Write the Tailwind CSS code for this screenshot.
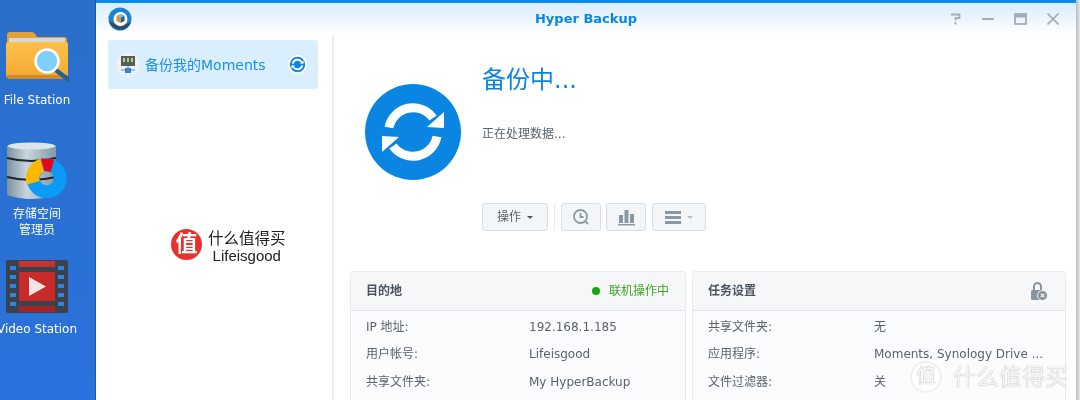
<!DOCTYPE html>
<html lang="zh"><head><meta charset="utf-8">
<script src="https://cdn.jsdelivr.net/npm/@tailwindcss/browser@4"></script>
</head>
<body class="m-0 w-[1080px] h-[400px] overflow-hidden bg-white font-['DejaVu_Sans','Noto_Sans_CJK_SC',sans-serif]">
<div class="relative flex w-[1080px] h-[400px] overflow-hidden blur-[0.35px]">
  <!-- Desktop -->
  <aside class="w-[96px] h-full shrink-0 bg-gradient-to-b from-[#2a6fca] to-[#2a72dc] flex flex-col items-start text-white text-[12px] leading-4 overflow-hidden border-r border-[#1c56a6]">
    <div class="w-[74px] flex flex-col items-center mt-[30px]">
      <svg width="64" height="52" viewBox="0 0 64 52">
        <path d="M2 5q0-3 3-3h22q2 0 3 2l2 3h27q3 0 3 3v30H2z" fill="#e3a136"/>
        <rect x="4" y="8" width="56" height="10" fill="#d8d8d4"/>
        <defs><linearGradient id="fg" x1="0" x2="0" y1="0" y2="1"><stop offset="0" stop-color="#fdc04c"/><stop offset="1" stop-color="#f3a931"/></linearGradient></defs>
        <path d="M1 14q0-2 2-2h58q2 0 2 2v31q0 3-3 3H4q-3 0-3-3z" fill="url(#fg)"/>
        <path d="M1 45h62q0 3-3 4H4q-3-1-3-4z" fill="#cf8c24"/>
        <path d="M52 41l12 9" stroke="#265f91" stroke-width="4.500" stroke-linecap="round"/>
        <circle cx="42" cy="31" r="11.500" fill="#7fd0ff" stroke="#fff" stroke-width="2.500"/>
      </svg>
      <span class="mt-[10px] whitespace-nowrap">File Station</span>
    </div>
    <div class="w-[74px] flex flex-col items-center mt-[33px]">
      <svg width="62" height="60" viewBox="0 0 62 60">
        <defs><linearGradient id="dbg" x1="0" x2="1" y1="0" y2="0"><stop offset="0" stop-color="#7c929f"/><stop offset=".4" stop-color="#c7d6de"/><stop offset="1" stop-color="#8399a6"/></linearGradient></defs>
        <path d="M1 5Q25 -1 50 5V54Q25 62 1 54z" fill="url(#dbg)"/>
        <ellipse cx="25.500" cy="5" rx="24" ry="3.500" fill="#dbe6ec"/>
        <path d="M1 17Q25 23 50 17M1 36Q25 42 50 36" stroke="#20262b" stroke-width="2" fill="none"/>
        <path fill-rule="evenodd" d="M40.700 17.300a20 20 0 1 0 0 40a20 20 0 1 0 0-40zM40.700 30.300a7 7 0 1 1 0 14a7 7 0 1 1 0-14z" fill="#0b9bf7"/>
        <path d="M20.800 43.500A20.500 20.500 0 0 1 34.500 17.800L38 30.500A7.500 7.500 0 0 0 33.500 40z" fill="#fdb900"/>
        <path d="M35 17.500L48.300 18.500L44.800 30.700L38.300 30z" fill="#e8051b"/>
      </svg>
      <span class="mt-[5px] text-center">存储空间<br>管理员</span>
    </div>
    <div class="w-[74px] flex flex-col items-center mt-[22px]">
      <svg width="62" height="54" viewBox="0 0 62 54">
        <rect x="0" y="0" width="62" height="53" rx="2" fill="#3b414d"/>
        <rect x="13" y="1" width="36" height="6" fill="#c53434"/>
        <rect x="13" y="46" width="36" height="6" fill="#a72325"/>
        <rect x="13" y="12" width="36" height="29" fill="#c92a2a"/>
        <path d="M23 17L40 26.500L23 36z" fill="#f2e4e2"/>
        <g fill="#2e86de"><rect x="4" y="6" width="6" height="4"/><rect x="4" y="15" width="6" height="4"/><rect x="4" y="24" width="6" height="4"/><rect x="4" y="33" width="6" height="4"/><rect x="4" y="42" width="6" height="4"/><rect x="52" y="6" width="6" height="4"/><rect x="52" y="15" width="6" height="4"/><rect x="52" y="24" width="6" height="4"/><rect x="52" y="33" width="6" height="4"/><rect x="52" y="42" width="6" height="4"/></g>
      </svg>
      <span class="mt-[7px] whitespace-nowrap">Video Station</span>
    </div>
  </aside>

  <!-- Window -->
  <div class="w-[980px] h-full shrink-0 flex flex-col border-t-[3px] border-[#0a8be8] bg-white">
    <header class="h-[31px] shrink-0 flex items-center bg-gradient-to-b from-[#d8ecfd] to-[#ffffff] pl-[12px] pr-[17px]">
      <svg width="24" height="24" viewBox="0 0 24 24" class="shrink-0">
        <circle cx="12" cy="12" r="11.500" fill="#1a86d0"/>
        <path d="M1 14A11.500 11.500 0 0 0 23 15L12 20z" fill="#31485f"/>
        <circle cx="12.500" cy="12" r="7" fill="#fff"/>
        <path d="M12.500 7l4 2v5l-4 2z" fill="#1e5f91"/>
        <path d="M12.500 7l-4 2v5l4 2z" fill="#ef8d2d"/>
        <path d="M12.500 7l4 2-4 2-4-2z" fill="#7fb9df"/>
      </svg>
      <h1 class="flex-1 text-center text-[13px] font-bold text-[#0a86e0] pl-[90px] pt-[1px]">Hyper Backup</h1>
      <div class="flex items-center gap-[20px] text-[#a3adb6]">
        <svg width="12" height="12" viewBox="0 0 12 12" fill="none" stroke="currentColor" stroke-width="1.800"><path d="M1 1.500h8.500v3.500H5.500v2.500"/><path d="M5.500 9v2.500"/></svg>
        <svg width="12" height="12" viewBox="0 0 12 12" fill="none" stroke="currentColor" stroke-width="2"><path d="M0 6h12"/></svg>
        <svg width="13" height="12" viewBox="0 0 13 12" fill="none" stroke="currentColor"><rect x="1" y="1" width="11" height="10" stroke-width="1.800"/><path d="M1 3h11" stroke-width="3"/></svg>
        <svg width="12" height="12" viewBox="0 0 12 12" fill="none" stroke="currentColor" stroke-width="1.600"><path d="M.5.500l11 11M11.500.500l-11 11"/></svg>
      </div>
    </header>
    <div class="flex-1 flex min-h-0">
      <!-- Sidebar -->
      <nav class="relative w-[238px] shrink-0 pl-[12px] pt-[6px] border-r-2 border-[#eceff2]">
        <div class="w-[210px] h-[49px] rounded-[3px] bg-[#d9eefe] flex items-center pl-[8px] pr-[11px]">
          <span class="w-[24px] h-[24px] rounded-full bg-[#edf2f6] flex items-center justify-center shrink-0">
            <svg width="16" height="18" viewBox="0 0 16 18"><rect x="1" y="0" width="14" height="10" fill="#565c5a"/><g fill="#b8d080"><rect x="3" y="2" width="2" height="4"/><rect x="7" y="2" width="2" height="4"/><rect x="11" y="2" width="2" height="4"/></g><path d="M8 10v3M1 14h14" stroke="#75818a"/><rect x="5" y="12" width="6" height="5" fill="#2888e0"/></svg>
          </span>
          <span class="ml-[5px] text-[14px] leading-none text-[#1b8fe9] whitespace-nowrap flex-1">备份我的Moments</span>
          <svg width="19" height="19" viewBox="0 0 96 96" class="shrink-0"><circle cx="48" cy="48" r="48" fill="#fff"/><circle cx="48" cy="48" r="39" fill="#0a85e6"/><g fill="none" stroke="#fff" stroke-width="10"><path d="M24 43.500A24.500 24.500 0 0 1 68 34"/><path d="M72 52.500A24.500 24.500 0 0 1 28 62"/></g><path d="M60 43L79 44V26z" fill="#fff"/><path d="M36 53L17 52V70z" fill="#fff"/></svg>
        </div>
        <!-- Watermark logo -->
        <div class="absolute left-[75px] top-[191px] flex items-center">
          <span class="w-[31px] h-[31px] rounded-full bg-[#e8302c] text-white text-[22px] leading-[29px] text-center font-bold">值</span>
          <div class="ml-[6px] mt-[6px] flex flex-col items-center text-[#222]">
            <span class="text-[15.500px] leading-[17px]">什么值得买</span>
            <span class="text-[15px] leading-[16px] font-['Liberation_Sans']">Lifeisgood</span>
          </div>
        </div>
      </nav>
      <!-- Main -->
      <main class="flex-1 min-w-0 flex flex-col pl-[16px]">
        <div class="flex h-[232px] shrink-0">
          <div class="w-[132px] shrink-0 pl-[15px] pt-[50px]">
            <svg width="96" height="96" viewBox="0 0 96 96"><circle cx="48" cy="48" r="48" fill="#0a85e2"/><g fill="none" stroke="#fff" stroke-width="9"><path d="M24 43.500A24.500 24.500 0 0 1 68 34"/><path d="M72 52.500A24.500 24.500 0 0 1 28 62"/></g><path d="M62 43L79 44V28z" fill="#fff"/><path d="M34 53L17 52V68z" fill="#fff"/></svg>
          </div>
          <div class="flex-1 pt-[30px]">
            <h2 class="text-[24px] leading-[32px] text-[#0a85e2]">备份中...</h2>
            <p class="mt-[29px] text-[12px] leading-[18px] text-[#59636d]">正在处理数据...</p>
            <div class="mt-[60px] flex items-center">
              <button class="w-[66px] h-[28px] rounded-[3px] border border-[#d7e0e9] bg-[#f3f6f9] flex items-center justify-center gap-[6px] text-[12px] text-[#59636d]">操作<span class="w-0 h-0 border-x-[3px] border-x-transparent border-t-[3px] border-t-[#4a535c]"></span></button>
              <span class="w-px h-[26px] bg-[#e5eaef] ml-[6px] mr-[6px]"></span>
              <button class="w-[40px] h-[28px] rounded-[3px] border border-[#d7e0e9] bg-[#f3f6f9] flex items-center justify-center">
                <svg width="18" height="18" viewBox="0 0 18 18" fill="none" stroke="#8b98a4" stroke-width="1.800"><circle cx="8.500" cy="8.500" r="6.500"/><path d="M8.500 5v4h3M13 13l3 3"/></svg>
              </button>
              <button class="ml-[5px] w-[40px] h-[28px] rounded-[3px] border border-[#d7e0e9] bg-[#f3f6f9] flex items-center justify-center">
                <svg width="17" height="17" viewBox="0 0 17 17" fill="#8b98a4"><rect x="1" y="6" width="4" height="8"/><rect x="6.500" y="1" width="4" height="13"/><rect x="12" y="5" width="4" height="9"/><rect x="0" y="15" width="17" height="1.500"/></svg>
              </button>
              <button class="ml-[6px] w-[54px] h-[28px] rounded-[3px] border border-[#d7e0e9] bg-[#f3f6f9] flex items-center justify-center gap-[6px]">
                <svg width="16" height="13" viewBox="0 0 16 13" fill="#8b98a4"><rect width="16" height="3"/><rect y="5" width="16" height="3"/><rect y="10" width="16" height="3"/></svg>
                <span class="w-0 h-0 border-x-[3px] border-x-transparent border-t-[3px] border-t-[#b3bcc5]"></span>
              </button>
            </div>
          </div>
        </div>
        <div class="flex gap-[6px] mt-[5px] pr-[11px] text-[12px] text-[#59636d]">
          <section class="w-[336px] shrink-0 h-[140px] rounded-t-[3px] border border-[#e6ebf0] bg-[#fbfcfe]">
            <div class="h-[39px] flex items-center justify-between pl-[15px] pr-[16px] bg-[#f5f7f9] border-b border-[#d9e5f0]">
              <span class="font-bold text-[#4a535c] text-[12px]">目的地</span>
              <span class="flex items-center text-[#3ba81f] text-[12px]"><span class="w-2 h-2 rounded-full bg-[#18a60c] mr-[9px]"></span>联机操作中</span>
            </div>
            <dl class="grid grid-cols-[163px_1fr] pl-[15px] pt-[2px] auto-rows-[27.500px] items-center">
              <dt>IP 地址:</dt><dd>192.168.1.185</dd>
              <dt>用户帐号:</dt><dd>Lifeisgood</dd>
              <dt>共享文件夹:</dt><dd>My HyperBackup</dd>
            </dl>
          </section>
          <section class="w-[374px] shrink-0 h-[140px] rounded-t-[3px] border border-[#e6ebf0] bg-[#fbfcfe]">
            <div class="h-[39px] flex items-center justify-between pl-[15px] pr-[17px] bg-[#f5f7f9] border-b border-[#d9e5f0]">
              <span class="font-bold text-[#4a535c] text-[12px]">任务设置</span>
              <svg width="19" height="19" viewBox="0 0 19 19" fill="#8a949d"><path d="M5 8V4.500a3.500 3.500 0 0 1 7 0V8" fill="none" stroke="#8a949d" stroke-width="2"/><rect x="2" y="8" width="12" height="10" rx="1.500"/><circle cx="13.500" cy="13.500" r="5" stroke="#f5f7f9"/><path d="M11.800 11.800l3.400 3.400M15.200 11.800l-3.400 3.400" stroke="#f5f7f9" stroke-width="1.200"/></svg>
            </div>
            <dl class="grid grid-cols-[166px_1fr] pl-[15px] pt-[2px] auto-rows-[27.500px] items-center">
              <dt>共享文件夹:</dt><dd>无</dd>
              <dt>应用程序:</dt><dd class="whitespace-nowrap">Moments, Synology Drive ...</dd>
              <dt>文件过滤器:</dt><dd>关</dd>
            </dl>
          </section>
        </div>
      </main>
    </div>
  </div>
  <div class="flex-1 bg-gradient-to-r from-[#b8b8b8] to-[#e8e8e8]"></div>
  <!-- Site watermark over the corner -->
  <div class="absolute right-[12px] bottom-[7px] flex items-center gap-[11px] text-[#f6f6f6] [text-shadow:0_0_1px_#8f8f8f]">
    <span class="w-[32px] h-[32px] rounded-full border-2 border-[#f0f0f0] bg-white/60 text-[20px] leading-[27px] text-center">值</span>
    <span class="text-[23px] leading-[30px] whitespace-nowrap">什么值得买</span>
  </div>
</div>
</body></html>
